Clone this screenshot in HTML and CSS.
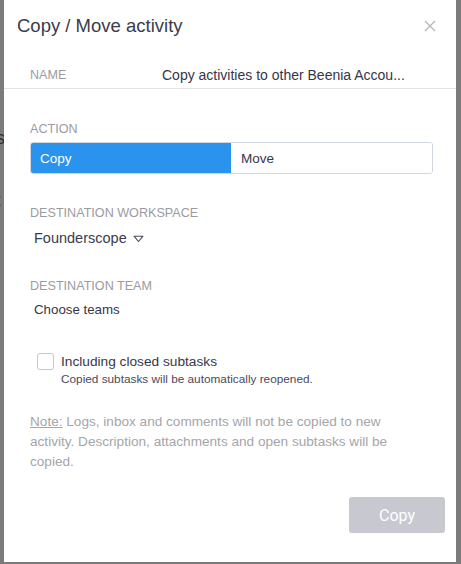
FILE: index.html
```html
<!DOCTYPE html>
<html>
<head>
<meta charset="utf-8">
<link rel="stylesheet" href="styles.css">
</head>
<body>
<div class="page">
  <div class="behind">
    <span class="b1">i</span>
    <span class="b2">s</span>
    <span class="b3">t</span>
  </div>
  <div class="modal">
    <div class="header">
      <h1 class="title">Copy / Move activity</h1>
      <svg class="close" width="12" height="12" viewBox="0 0 12 12"><path d="M1 1L11 11M11 1L1 11" stroke="#b3b3b8" stroke-width="1.2" fill="none"/></svg>
    </div>
    <div class="name-row">
      <span class="label name-label">NAME</span>
      <span class="name-value">Copy activities to other Beenia Accou...</span>
    </div>
    <div class="body">
      <div class="label action-label">ACTION</div>
      <div class="segment">
        <div class="seg seg-active">Copy</div>
        <div class="seg">Move</div>
      </div>
      <div class="label ws-label">DESTINATION WORKSPACE</div>
      <div class="value ws-value">Founderscope
        <svg class="caret" width="11" height="8" viewBox="0 0 11 8"><path d="M1 1.2H10L5.5 6.5Z" stroke="#4a4a5a" stroke-width="1.1" fill="none" stroke-linejoin="round"/></svg>
      </div>
      <div class="label team-label">DESTINATION TEAM</div>
      <div class="value team-value">Choose teams</div>
      <div class="check-row">
        <span class="checkbox"></span>
        <span class="check-text">Including closed subtasks</span>
      </div>
      <div class="check-sub">Copied subtasks will be automatically reopened.</div>
      <p class="note"><span class="note-u">Note:</span> Logs, inbox and comments will not be copied to new activity. Description, attachments and open subtasks will be copied.</p>
      <div class="footer">
        <button class="btn">Copy</button>
      </div>
    </div>
  </div>
</div>
</body>
</html>
```

FILE: styles.css
```css
html, body {
  margin: 0;
  padding: 0;
}
body {
  background: #7b7b7b;
  font-family: "Liberation Sans", Arial, sans-serif;
  width: 461px;
  height: 564px;
  overflow: hidden;
}
.page {
  position: relative;
  width: 461px;
  height: 564px;
}
.behind {
  position: absolute;
  left: 0;
  top: 0;
  width: 4px;
  height: 564px;
  overflow: hidden;
  color: #2e2e33;
  font-size: 18px;
}
.behind span {
  position: absolute;
  left: -4px;
}
.b1 { top: 10px; }
.b2 { top: 128px; }
.b3 { top: 190px; color: #555; }
.modal {
  position: relative;
  margin-left: 4px;
  width: 452px;
  height: 562px;
  background: #ffffff;
  display: flex;
  flex-direction: column;
}
.header {
  display: flex;
  align-items: center;
  justify-content: space-between;
  padding: 14px 20px 0 13px;
}
.title {
  margin: 0;
  font-size: 18.5px;
  line-height: 24px;
  font-weight: normal;
  color: #3b3b4c;
}
.close {
  display: block;
}
.name-row {
  display: flex;
  align-items: center;
  margin-top: 28px;
  padding: 0 26px 4px 26px;
  line-height: 18px;
  border-bottom: 1px solid #e3e3e6;
  height: 18px;
}
.label {
  font-size: 12.6px;
  line-height: 16px;
  color: #9b9b9f;
  text-transform: uppercase;
}
.name-label {
  width: 132px;
  line-height: 18px;
}
.name-value {
  font-size: 14px;
  color: #36364a;
  white-space: nowrap;
}
.body {
  padding: 32px 23px 0 26px;
  display: flex;
  flex-direction: column;
}
.segment {
  display: flex;
  margin-top: 5px;
  height: 32px;
  border-radius: 3px;
  overflow: hidden;
  border: 1px solid #d2d6de;
  box-sizing: border-box;
}
.seg {
  flex: 1;
  display: flex;
  align-items: center;
  padding-left: 10px;
  font-size: 13.5px;
  color: #36364a;
  background: #fff;
}
.seg-active {
  background: #2a93ee;
  color: #ffffff;
  margin: -1px 0 -1px -1px;
}
.ws-label {
  margin-top: 31px;
}
.value {
  font-size: 13.3px;
  line-height: 20px;
  color: #36364a;
  padding-left: 4px;
  display: flex;
  align-items: center;
}
.ws-value {
  margin-top: 7px;
  font-size: 14.5px;
  color: #3b3b4c;
}
.caret {
  margin-left: 6px;
  margin-top: 1px;
}
.team-label {
  margin-top: 30px;
}
.team-value {
  margin-top: 6px;
}
.check-row {
  display: flex;
  align-items: center;
  margin-top: 32px;
  padding-left: 7px;
  height: 18px;
}
.checkbox {
  width: 17px;
  height: 17px;
  border: 1.5px solid #c6c6cc;
  border-radius: 3px;
  box-sizing: border-box;
  margin-right: 7px;
}
.check-text {
  font-size: 13.7px;
  color: #36364a;
}
.check-sub {
  margin-top: 2px;
  padding-left: 31px;
  font-size: 11.8px;
  line-height: 14px;
  color: #4a4a5a;
}
.note {
  margin: 26px 0 0 0;
  font-size: 13.6px;
  line-height: 20px;
  color: #a5a5aa;
  padding-right: 20px;
}
.note-u {
  text-decoration: underline;
}
.footer {
  display: flex;
  justify-content: flex-end;
  margin-top: 25px;
  margin-right: -12px;
}
.btn {
  width: 96px;
  height: 36px;
  border: none;
  border-radius: 3px;
  background: #c8c8d0;
  color: #ffffff;
  font-family: Roboto, "Liberation Sans", sans-serif;
  font-size: 16px;
  padding: 0;
}
```
